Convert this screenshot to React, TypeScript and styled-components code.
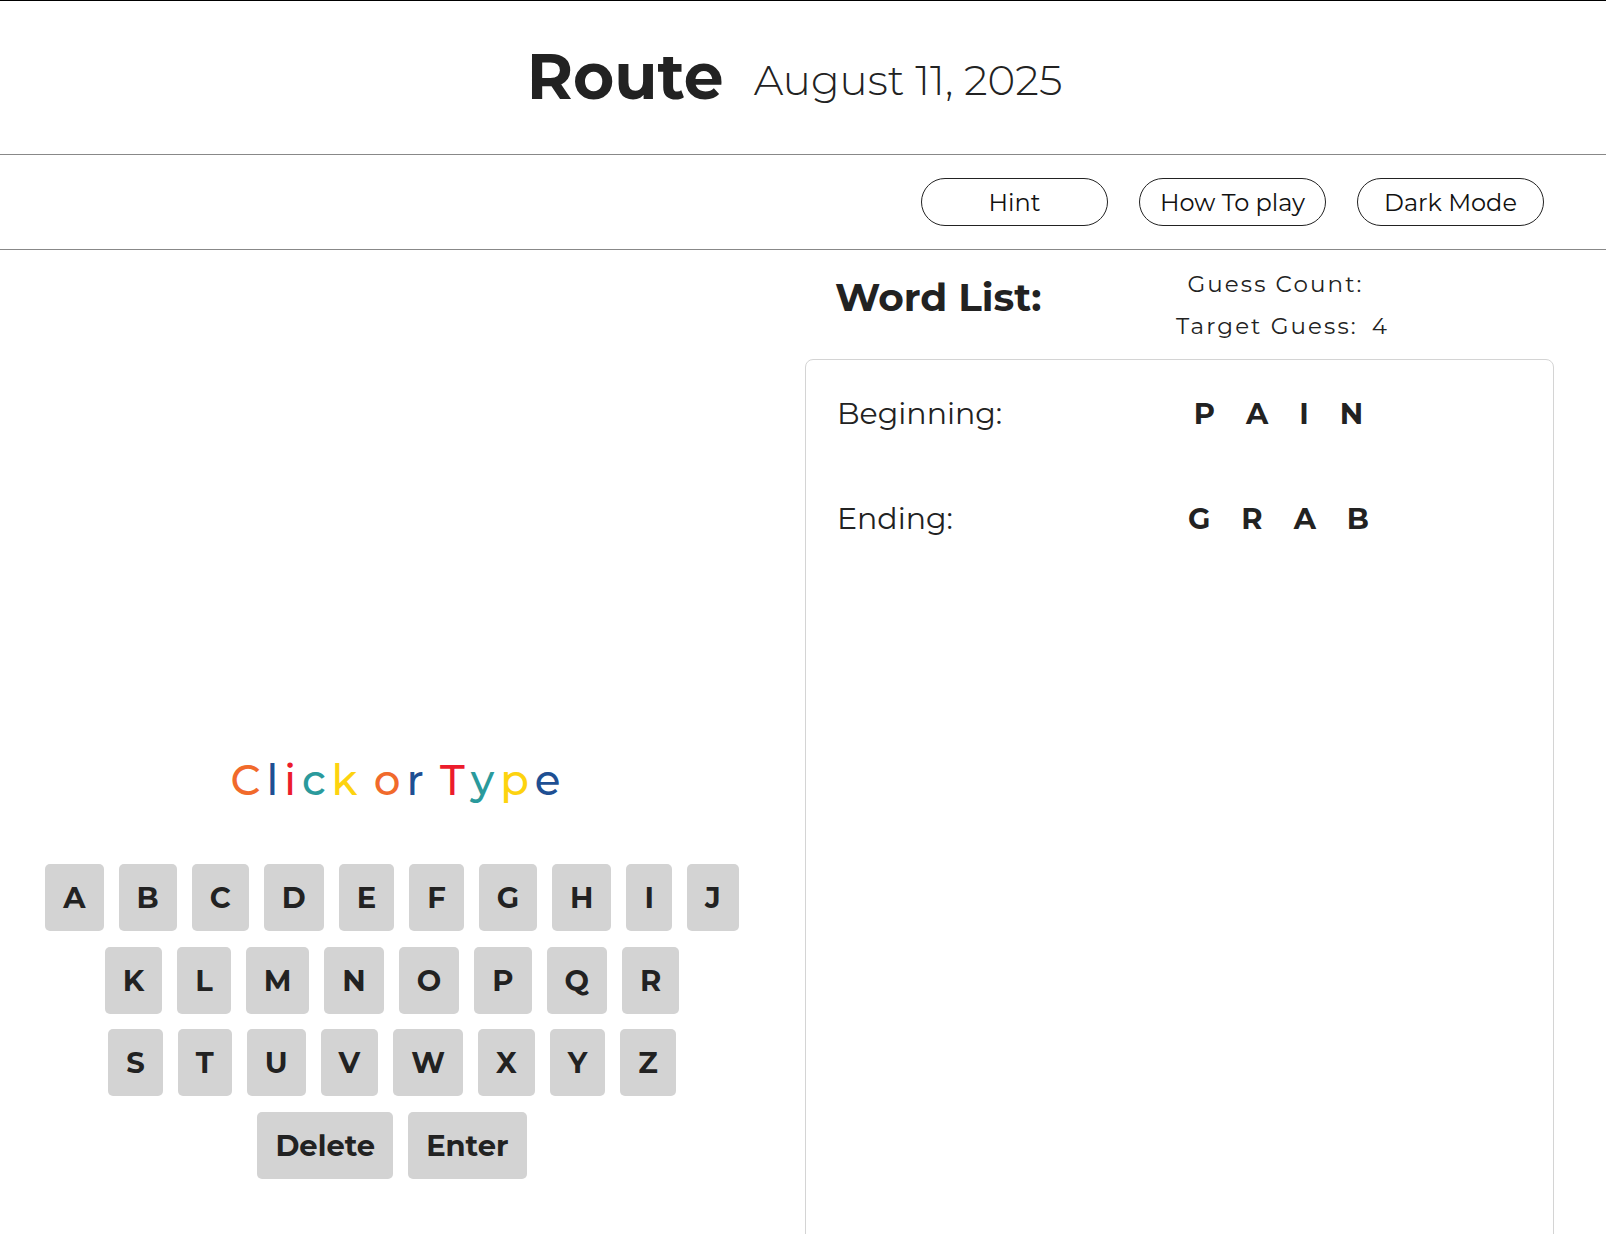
import React from "react";
import styled, { createGlobalStyle } from "styled-components";

const FONT = `"Montserrat", "DejaVu Sans", "Noto Sans", sans-serif`;

const GlobalStyle = createGlobalStyle`
  html, body {
    margin: 0;
    padding: 0;
    background: #ffffff;
  }
  body {
    font-family: ${FONT};
    color: #222222;
  }
  * {
    box-sizing: border-box;
  }
`;

const Page = styled.div`
  width: 100%;
  min-height: 100vh;
  border-top: 1px solid #000000;
`;

const Header = styled.header`
  height: 154px;
  display: flex;
  justify-content: center;
  align-items: flex-start;
  gap: 30px;
  padding: 44px 17px 0 0;
  border-bottom: 1px solid #888888;
`;

const Title = styled.h1`
  margin: 0;
  font-size: 63px;
  line-height: 1;
  font-weight: 700;
  color: #222222;
`;

const DateText = styled.span`
  margin-top: 14px;
  font-size: 42px;
  line-height: 1;
  font-weight: 300;
  color: #222222;
`;

const Toolbar = styled.nav`
  height: 95px;
  display: flex;
  justify-content: flex-end;
  align-items: center;
  gap: 31px;
  padding: 0 62px 0 0;
  border-bottom: 1px solid #888888;
`;

const PillButton = styled.button`
  width: 187px;
  height: 48px;
  border: 1px solid #222222;
  border-radius: 24px;
  background: #ffffff;
  color: #111111;
  font-family: ${FONT};
  font-size: 24px;
  font-weight: 400;
  cursor: pointer;
`;

const Main = styled.main`
  display: flex;
  align-items: flex-start;
`;

const LeftColumn = styled.section`
  width: 784px;
  padding-top: 505px;
  display: flex;
  flex-direction: column;
  align-items: center;
`;

const Prompt = styled.div`
  font-size: 42px;
  line-height: 1.2;
  font-weight: 500;
  letter-spacing: 6px;
  word-spacing: -7px;
  margin-left: 13px;
`;

const PromptLetter = styled.span<{ $color: string }>`
  color: ${(p) => p.$color};
`;

const Keyboard = styled.div`
  margin-top: 59px;
  display: flex;
  flex-direction: column;
  align-items: center;
  gap: 15.5px;
`;

const KeyRow = styled.div`
  display: flex;
  justify-content: center;
  gap: 15px;
`;

const Key = styled.button`
  height: 67px;
  padding: 0 18px;
  border: none;
  border-radius: 5px;
  background: #d3d3d3;
  color: #222222;
  font-family: ${FONT};
  font-size: 29px;
  font-weight: 700;
  cursor: pointer;
`;

const RightColumn = styled.section`
  width: 749px;
  margin-left: 21px;
`;

const WordListHeader = styled.div`
  display: grid;
  grid-template-columns: 270px 347px;
  padding: 13px 0 12px 30px;
`;

const WordListTitle = styled.h2`
  margin: 11px 0 0;
  font-size: 39px;
  line-height: 1.2;
  font-weight: 700;
  color: #222222;
`;

const Stats = styled.div`
  display: flex;
  flex-direction: column;
  align-items: center;
  margin-left: 8px;
  font-size: 23px;
  line-height: 42px;
  font-weight: 400;
  letter-spacing: 2.1px;
`;

const StatValue = styled.span`
  margin-left: 14px;
`;

const Panel = styled.div`
  min-height: 900px;
  border: 1px solid #d4d4d4;
  border-radius: 8px;
  padding: 32px 0 0 31px;
  display: flex;
  flex-direction: column;
  gap: 61px;
`;

const PanelRow = styled.div`
  display: grid;
  grid-template-columns: 268px 347px;
  align-items: center;
  line-height: 44px;
`;

const RowLabel = styled.span`
  font-size: 30px;
  font-weight: 400;
`;

const Letters = styled.div`
  display: flex;
  justify-content: center;
  gap: 31px;
  font-size: 29px;
  font-weight: 700;
`;

const promptColors = {
  orange: "#f16a2b",
  blue: "#1e4f93",
  red: "#ec1c2c",
  teal: "#2a9a9c",
  yellow: "#fdd30f",
};

const prompt: [string, string][] = [
  ["C", promptColors.orange],
  ["l", promptColors.blue],
  ["i", promptColors.red],
  ["c", promptColors.teal],
  ["k", promptColors.yellow],
  [" ", "transparent"],
  ["o", promptColors.orange],
  ["r", promptColors.blue],
  [" ", "transparent"],
  ["T", promptColors.red],
  ["y", promptColors.teal],
  ["p", promptColors.yellow],
  ["e", promptColors.blue],
];

const keyRows = [
  ["A", "B", "C", "D", "E", "F", "G", "H", "I", "J"],
  ["K", "L", "M", "N", "O", "P", "Q", "R"],
  ["S", "T", "U", "V", "W", "X", "Y", "Z"],
  ["Delete", "Enter"],
];

const words = [
  { label: "Beginning:", word: "PAIN" },
  { label: "Ending:", word: "GRAB" },
];

const guessCount = "";
const targetGuess = 4;

export default function App() {
  return (
    <Page>
      <GlobalStyle />
      <Header>
        <Title>Route</Title>
        <DateText>August 11, 2025</DateText>
      </Header>
      <Toolbar>
        <PillButton>Hint</PillButton>
        <PillButton>How To play</PillButton>
        <PillButton>Dark Mode</PillButton>
      </Toolbar>
      <Main>
        <LeftColumn>
          <Prompt>
            {prompt.map(([ch, color], i) => (
              <PromptLetter key={i} $color={color}>
                {ch}
              </PromptLetter>
            ))}
          </Prompt>
          <Keyboard>
            {keyRows.map((row, i) => (
              <KeyRow key={i}>
                {row.map((k) => (
                  <Key key={k}>{k}</Key>
                ))}
              </KeyRow>
            ))}
          </Keyboard>
        </LeftColumn>
        <RightColumn>
          <WordListHeader>
            <WordListTitle>Word List:</WordListTitle>
            <Stats>
              <span>
                Guess Count:<StatValue>{guessCount}</StatValue>
              </span>
              <span>
                Target Guess:<StatValue>{targetGuess}</StatValue>
              </span>
            </Stats>
          </WordListHeader>
          <Panel>
            {words.map((w) => (
              <PanelRow key={w.label}>
                <RowLabel>{w.label}</RowLabel>
                <Letters>
                  {w.word.split("").map((ch, i) => (
                    <span key={i}>{ch}</span>
                  ))}
                </Letters>
              </PanelRow>
            ))}
          </Panel>
        </RightColumn>
      </Main>
    </Page>
  );
}
